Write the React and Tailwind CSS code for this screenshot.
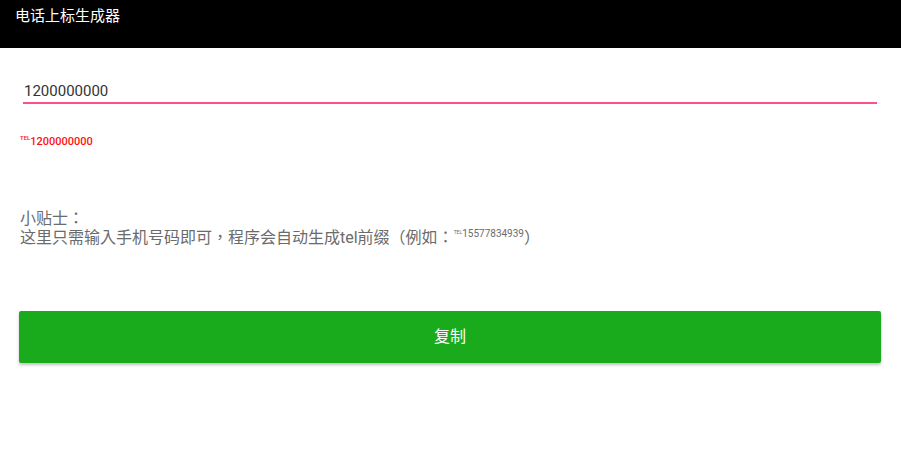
import React from 'react';

const font = { fontFamily: 'Roboto, "Noto Sans CJK SC", sans-serif' };
const tipFont = { fontFamily: 'Roboto, "Noto Sans CJK TC", sans-serif' };

export default function App() {
  const [phone, setPhone] = React.useState('1200000000');

  return (
    <div className="flex h-[458px] w-[901px] flex-col bg-white" style={font}>
      <div className="h-12 bg-black px-[15px] pt-[6px] text-[15px] leading-5 text-white">
        电话上标生成器
      </div>

      <div className="px-[23px] pt-[33px]">
        <input
          value={phone}
          onChange={(e) => setPhone(e.target.value)}
          className="block h-[23px] w-[854px] border-b-2 border-[#ff4f8b] px-px pb-[2px] text-[15px] leading-5 text-[#333] outline-none"
        />
      </div>

      <div className="mt-[30px] flex items-start px-[20px] text-[11px] font-medium leading-4 text-[#ff0f0f]">
        <span className="mt-[-1px] text-[6px] leading-[10px]">TEL</span>
        <span>{phone}</span>
      </div>

      <div className="mt-[59px] px-[20px] text-[16px] leading-[19px] text-[#6b6b6b]" style={tipFont}>
        <div>小贴士：</div>
        <div className="flex items-start">
          这里只需输入手机号码即可，程序会自动生成tel前缀（例如：
          <span className="mt-[-2px] text-[5px] leading-3">TEL</span>
          <span className="mt-[-2px] text-[10px] leading-4">15577834939</span>
          ）
        </div>
      </div>

      <div className="px-[19px] pt-[64px]">
        <button className="flex h-[52px] w-[862px] items-center justify-center rounded-[2px] bg-[#1aab1c] text-[16px] text-white shadow-[0_2px_3px_rgba(0,0,0,0.25)]">
          复制
        </button>
      </div>
    </div>
  );
}
